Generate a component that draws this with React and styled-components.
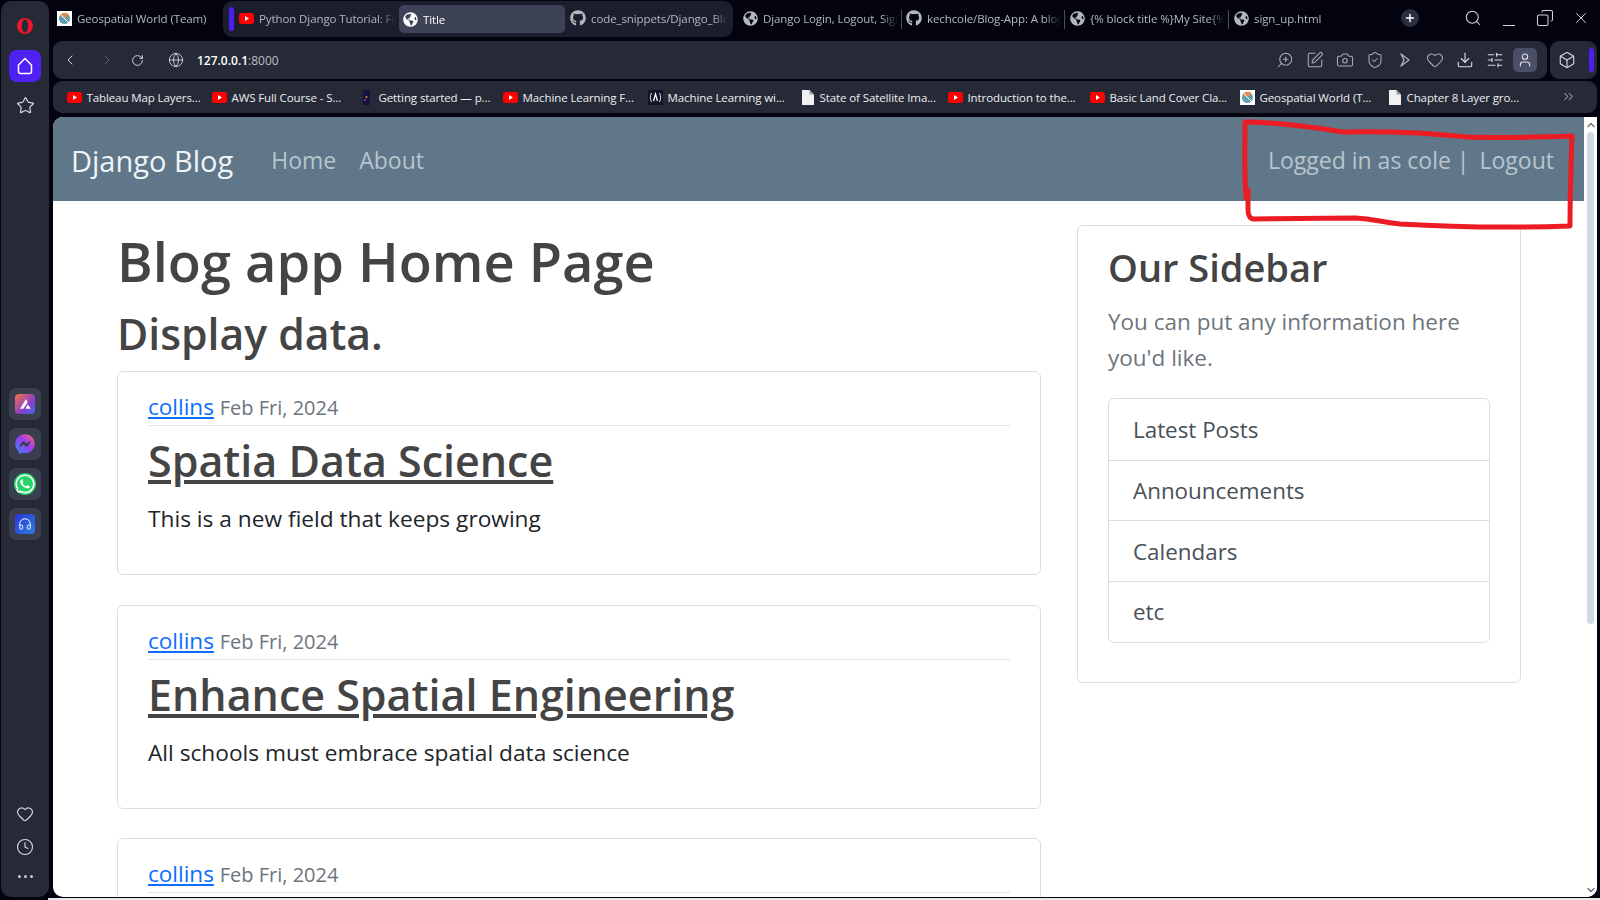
import React from 'react';
import styled, { createGlobalStyle } from 'styled-components';
import {
  ChevronLeft, ChevronRight, RotateCw, Globe, ZoomIn, SquarePen, Camera, ShieldCheck,
  Heart, Download, SlidersHorizontal, User, Box, Search, Copy, X, Plus, Star, Clock, ChevronsRight, ChevronDown, ChevronUp, Headphones,
} from 'lucide-react';
import { FaGithub, FaGlobeAmericas, FaWhatsapp, FaFacebookMessenger } from 'react-icons/fa';

const UI = '"Open Sans", "Noto Sans", "Liberation Sans", sans-serif';

const Global = createGlobalStyle`
  html, body { margin: 0; padding: 0; height: 900px; overflow: hidden; background: #02030f; }
  * { box-sizing: border-box; }
  body { font-family: ${UI}; }
`;

const Screen = styled.div`
  position: relative; width: 1600px; height: 900px; background: #02030f; overflow: hidden;
  display: grid; grid-template-columns: 53px 1fr;
`;
const Rail = styled.aside`
  margin: 1px 0 3px 1px; width: 48px; background: #262a36; border-radius: 10px;
  display: flex; flex-direction: column; align-items: center; padding-top: 17px; color: #d5d8df;
`;
const RailHome = styled.div`
  width: 32px; height: 32px; border-radius: 8px; background: #5021f5; color: #fff;
  display: flex; align-items: center; justify-content: center; margin-top: 16px;
`;
const RailPlain = styled.div`
  height: 32px; margin-top: 7px; display: flex; align-items: center; justify-content: center;
`;
const RailApps = styled.div`
  margin-top: 267px; display: flex; flex-direction: column; gap: 8px;
`;
const RailApp = styled.div`
  width: 32px; height: 32px; border-radius: 7px; background: #3a3e4e;
  display: flex; align-items: center; justify-content: center;
`;
const AppTile = styled.div`
  width: 20px; height: 20px; border-radius: 4px; background: ${p => p.$bg};
  display: flex; align-items: center; justify-content: center; color: #fff;
`;
const RailFoot = styled.div`
  margin-top: auto; display: flex; flex-direction: column; align-items: center; gap: 15px; padding-bottom: 19px;
`;
const Dots = styled.div`
  display: flex; gap: 3px; margin-top: 4px;
  & > i { width: 3px; height: 3px; border-radius: 50%; background: #c8ccd6; display: block; }
`;

const Column = styled.div`
  display: flex; flex-direction: column; min-width: 0; height: 900px;
`;
const TabRow = styled.div`
  height: 41px; display: flex; align-items: flex-start; position: relative; flex: none;
`;
const TabGroup = styled.div`
  display: flex; align-items: center; height: 36px; margin-top: 1px; background: #1b1e2c; border-radius: 9px; padding-left: 6px;
  margin-right: 5px;
`;
const GroupBar = styled.div`
  width: 5px; height: 24px; background: #4a1ff0; border-radius: 3px; margin-right: 5px; flex: none;
`;
const Tab = styled.div`
  width: ${p => p.$w}px; height: ${p => p.$active ? 28 : 36}px; flex: none; display: flex; align-items: center; gap: 5px;
  padding: 0 4px ${p => p.$active ? 0 : 2}px ${p => p.$pad ?? 4}px; margin-top: ${p => p.$plain ? 1 : 0}px;
  border-radius: 5px; background: ${p => p.$active ? '#3e4257' : 'transparent'};
  color: ${p => p.$active ? '#fff' : '#b4b7c1'}; font-size: 11.5px; letter-spacing: -0.1px; position: relative;
  ${p => p.$sep ? `&::after { content: ''; position: absolute; right: 0; top: 9px; height: 19px; width: 1px; background: #4a4d5a; }` : ''}
`;
const TabText = styled.span`
  white-space: nowrap; overflow: hidden; flex: 1; min-width: 0;
  -webkit-mask-image: linear-gradient(to right, #000 ${p => p.$full ? 100 : 88}%, transparent 100%);
  mask-image: linear-gradient(to right, #000 ${p => p.$full ? 100 : 88}%, transparent 100%);
`;
const NewTab = styled.div`
  position: absolute; left: 1348px; top: 9px; width: 18px; height: 18px; border-radius: 50%;
  background: #2b2e3c; color: #fff; display: flex; align-items: center; justify-content: center;
`;
const WindowButtons = styled.div`
  position: absolute; right: 10px; top: 9px; display: flex; align-items: center; gap: 18px; color: #d2d4da;
`;
const MinGlyph = styled.div`
  width: 18px; height: 18px; position: relative;
  &::after { content: ''; position: absolute; left: 3px; right: 3px; bottom: 1px; height: 1px; background: #d2d4da; }
`;
const Mirrored = styled.span`
  display: flex; transform: scaleX(-1);
`;

const AddressRow = styled.div`
  height: 38px; display: flex; gap: 3px; flex: none; padding-right: 3px;
`;
const AddressBar = styled.div`
  flex: 1; background: #262a36; border-radius: 9px; display: flex; align-items: center; color: #c6c9d1;
  padding-left: 8px; padding-right: 10px;
`;
const NavBtn = styled.div`
  width: 18px; height: 18px; display: flex; align-items: center; justify-content: center;
  margin-right: ${p => p.$mr}px; color: ${p => p.$dim ? '#5c6070' : '#cfd2da'};
`;
const Url = styled.div`
  font-size: 12px; color: #fff; font-weight: 600;
  & > span { color: #b9bcc6; font-weight: 400; }
`;
const Tools = styled.div`
  margin-left: auto; display: flex; align-items: center; gap: 12px; color: #a9acb7;
`;
const ProfileBtn = styled.div`
  width: 24px; height: 24px; border-radius: 5px; background: #4b4f66; color: #e2e4ea; margin-left: -3px;
  display: flex; align-items: center; justify-content: center;
`;
const ExtBox = styled.div`
  width: 47px; background: #262a36; border-radius: 9px; display: flex; align-items: center; justify-content: space-between;
  padding: 0 3px 0 8px; color: #d5d8df;
`;
const ExtBar = styled.div`
  width: 5px; height: 24px; background: #4a1ff0; border-radius: 3px;
`;
const Bookmarks = styled.div`
  height: 32px; margin: 2px 3px 0 0; background: #262a36; border-radius: 9px; display: flex; align-items: center;
  padding-left: 14px; flex: none; color: #eceef2; font-size: 11.5px; letter-spacing: -0.1px; position: relative;
`;
const Bookmark = styled.div`
  width: ${p => p.$w}px; flex: none; display: flex; align-items: center; gap: 4.500px; white-space: nowrap; overflow: hidden;
`;
const MoreBookmarks = styled.div`
  position: absolute; left: 1508px; top: 8px; color: #c6c9d1; display: flex;
`;

const Page = styled.main`
  margin-top: 4px; height: 780px; flex: none; background: #fff; border-radius: 10px 0 10px 10px; overflow: hidden;
  display: grid; grid-template-columns: 1531px 1fr; margin-right: 3px;
`;
const PageBody = styled.div`
  min-width: 0; overflow: hidden; color: #444;
`;
const Scrollbar = styled.div`
  position: relative; background: #fff; display: flex; flex-direction: column; align-items: center; color: #777;
`;
const Thumb = styled.div`
  width: 7px; height: 492px; background: #cfd9e3; border-radius: 4px;
`;
const ScrollArrow = styled.div`
  height: 15px; display: flex; align-items: center; justify-content: center;
  margin-top: ${p => p.$auto ? 'auto' : 0};
`;
const Navbar = styled.nav`
  height: 84px; background: #5f7789; display: flex; align-items: center; padding: 2px 30px 0 18px; font-size: 23px;
  color: #b8c5ce;
`;
const Brand = styled.div`
  font-size: 29px; color: #f1f4f6; margin-right: 38px;
`;
const NavLink = styled.div`
  margin-right: ${p => p.$mr || 0}px; margin-left: ${p => p.$ml || 0}px; white-space: nowrap;
`;
const UserInfo = styled.div`
  margin-left: auto; display: flex; white-space: nowrap;
`;
const Content = styled.div`
  display: grid; grid-template-columns: 924px 444px; column-gap: 36px; padding: 24px 0 0 64px;
`;
const Posts = styled.div`
  display: flex; flex-direction: column;
`;
const Title = styled.h1`
  margin: 0; font-size: 54.2px; line-height: 72px; font-weight: 600; color: #444;
`;
const Subtitle = styled.h2`
  margin: 8px 0 0; font-size: 42.7px; line-height: 58px; font-weight: 600; color: #444; height: 66px;
`;
const Card = styled.article`
  border: 1px solid #ddd; border-radius: 6px; padding: 16px 30px 0; height: 204px; margin-bottom: 29.7px; flex: none;
`;
const Meta = styled.div`
  border-bottom: 1px solid #e2e2e2; height: 38px; font-size: 22.5px; line-height: 38px; color: #6c757d; white-space: nowrap;
`;
const MetaDate = styled.span`
  font-size: 20px;
`;
const Author = styled.a`
  color: #0d6efd; text-decoration: underline;
`;
const PostTitle = styled.h2`
  margin: 0; font-size: 43px; line-height: 70px; font-weight: 600; color: #444; text-decoration: underline; white-space: nowrap;
`;
const PostBody = styled.p`
  margin: 5px 0 0; font-size: 22.7px; line-height: 36px; color: #212529;
`;
const Aside = styled.aside`
  border: 1px solid #ddd; border-radius: 6px; padding: 16px 30px 0; height: 458px;
`;
const AsideTitle = styled.h3`
  margin: 0; font-size: 38px; line-height: 50px; font-weight: 600; color: #444;
`;
const AsideText = styled.p`
  margin: 12px 0 0; font-size: 22.5px; line-height: 36px; color: #6c757d;
`;
const List = styled.ul`
  list-style: none; margin: 22px 0 0; padding: 0; border: 1px solid #ddd; border-radius: 6px;
`;
const ListItem = styled.li`
  height: 60.7px; padding-left: 24px; display: flex; align-items: center; font-size: 22.4px; color: #495057;
  & + & { border-top: 1px solid #ddd; }
`;
const Scribble = styled.svg`
  position: absolute; left: 0; top: 0; width: 1600px; height: 900px; pointer-events: none;
`;
const BottomEdge = styled.div`
  position: absolute; left: 48px; right: 0; bottom: 0; height: 2px; background: #e8e8e8;
`;

const Yt = () => (
  <svg width="15" height="11" viewBox="0 0 15 11" style={{ flex: 'none' }}>
    <rect width="15" height="11" rx="2.5" fill="#f00" />
    <path d="M6 3l4 2.5L6 8z" fill="#fff" />
  </svg>
);
const Geo = () => (
  <svg width="15" height="15" viewBox="0 0 15 15" style={{ flex: 'none' }}>
    <rect width="15" height="15" fill="#fff" />
    <circle cx="7.5" cy="7.5" r="5.5" fill="#5f9fb0" />
    <path d="M3 5a5.5 5.500 0 0 1 8-2.500L9 7z" fill="#e98a3c" />
    <path d="M4 4l8 8" stroke="#fff" strokeWidth="1" />
  </svg>
);
const Doc = () => (
  <svg width="12" height="15" viewBox="0 0 12 15" style={{ flex: 'none', marginLeft: 2, marginRight: 1 }}>
    <path d="M0 0h7.500L12 4.500V15H0z" fill="#f1f1f3" />
    <path d="M7.500 0v4.500H12z" fill="#9b9ca4" />
  </svg>
);
const Pytorch = () => (
  <svg width="15" height="15" viewBox="0 0 15 15" style={{ flex: 'none' }}>
    <rect x="4" width="7" height="15" fill="#17123f" />
    <circle cx="7.5" cy="7" r="1" fill="#e0a030" />
    <circle cx="6" cy="10" r="1" fill="#b03090" />
  </svg>
);
const Tf = () => (
  <svg width="15" height="15" viewBox="0 0 15 15" style={{ flex: 'none' }}>
    <rect width="15" height="15" fill="#101428" />
    <path d="M3.500 3C2 6 2 9 3.500 12M11.500 3C13 6 13 9 11.500 12" stroke="#dfe2ea" strokeWidth="1" fill="none" />
    <path d="M5.500 11l2-7 2 7" stroke="#fff" strokeWidth="1.3" fill="none" />
  </svg>
);
const Opera = () => (
  <svg width="16" height="16" viewBox="0 0 16 16">
    <path fillRule="evenodd" d="M8 0a8 8 0 1 1 0 16A8 8 0 0 1 8 0zm0 1.600c-1.900 0-3.200 2.800-3.200 6.400s1.300 6.400 3.200 6.400 3.200-2.800 3.200-6.400S9.900 1.600 8 1.600z" fill="#f0142c" />
  </svg>
);
const HouseIcon = () => (
  <svg width="20" height="20" viewBox="0 0 20 20" fill="none" stroke="currentColor" strokeWidth="1.5" strokeLinejoin="round">
    <path d="M3.500 9L10 2.500 16.500 9v6.500a2 2 0 0 1-2 2h-9a2 2 0 0 1-2-2z" />
  </svg>
);
const MessengerGradient = () => (
  <svg width="0" height="0" style={{ position: 'absolute' }}>
    <defs>
      <linearGradient id="msg" x1="0" y1="1" x2="1" y2="0">
        <stop offset="0" stopColor="#2f8cff" />
        <stop offset="0.55" stopColor="#a03cf0" />
        <stop offset="1" stopColor="#ff6a6a" />
      </linearGradient>
    </defs>
  </svg>
);

const tabsAfter = [
  { icon: <FaGlobeAmericas size={15} />, text: 'Django Login, Logout, Sign Up Tutorial', w: 164, pad: 5, sep: true },
  { icon: <FaGithub size={16} />, text: 'kechcole/Blog-App: A blog application', w: 163, pad: 4, sep: true },
  { icon: <FaGlobeAmericas size={15} />, text: '{% block title %}My Site{% endblock %}', w: 164, pad: 5, sep: true },
  { icon: <FaGlobeAmericas size={15} />, text: 'sign_up.html', w: 120, pad: 5, full: true },
];
const bookmarks = [
  [<Yt />, 'Tableau Map Layers...', 145], [<Yt />, 'AWS Full Course - S...', 147],
  [<Pytorch />, 'Getting started — p...', 144], [<Yt />, 'Machine Learning F...', 145],
  [<Tf />, 'Machine Learning wi...', 152], [<Doc />, 'State of Satellite Ima...', 148],
  [<Yt />, 'Introduction to the...', 142], [<Yt />, 'Basic Land Cover Cla...', 150],
  [<Geo />, 'Geospatial World (T...', 147], [<Doc />, 'Chapter 8 Layer gro...', 140],
];
const posts = ['Spatia Data Science', 'Enhance Spatial Engineering', 'Third Post'];
const links = ['Latest Posts', 'Announcements', 'Calendars', 'etc'];
const tools = [SquarePen, Camera, ShieldCheck];

export default function App() {
  return (
    <Screen>
      <Global />
      <MessengerGradient />
      <Rail>
        <Opera />
        <RailHome><HouseIcon /></RailHome>
        <RailPlain><Star size={19} strokeWidth={1.5} /></RailPlain>
        <RailApps>
          <RailApp><AppTile $bg="linear-gradient(135deg,#f5733a,#8a3fd0 60%,#3a6be0)">
            <svg width="13" height="13" viewBox="0 0 12 12"><path d="M6.500 1L1 10h3l4-6zM8 6l-2 4h5z" fill="#fff" /></svg>
          </AppTile></RailApp>
          <RailApp><FaFacebookMessenger size={20} fill="url(#msg)" /></RailApp>
          <RailApp><FaWhatsapp size={22} color="#fff" style={{ background: '#25d366', borderRadius: 11 }} /></RailApp>
          <RailApp><AppTile $bg="linear-gradient(135deg,#2a35d8,#2d7de0)"><Headphones size={14} strokeWidth={1.6} /></AppTile></RailApp>
        </RailApps>
        <RailFoot>
          <Heart size={18} strokeWidth={1.5} />
          <Clock size={18} strokeWidth={1.5} />
          <Dots><i /><i /><i /></Dots>
        </RailFoot>
      </Rail>
      <Column>
        <TabRow>
          <Tab $w={170} $pad={4} $plain><Geo /><TabText $full>Geospatial World (Team)</TabText></Tab>
          <TabGroup>
            <GroupBar />
            <Tab $w={160} $pad={0}><Yt /><TabText>Python Django Tutorial: Full-Featured</TabText></Tab>
            <Tab $w={166} $active><FaGlobeAmericas size={15} style={{ flex: 'none' }} /><TabText $full>Title</TabText></Tab>
            <Tab $w={168} $pad={5}><FaGithub size={16} style={{ flex: 'none' }} /><TabText>code_snippets/Django_Blog/12-Password</TabText></Tab>
          </TabGroup>
          {tabsAfter.map(t => (
            <Tab key={t.text} $w={t.w} $pad={t.pad} $sep={t.sep} $plain>
              {React.cloneElement(t.icon, { style: { flex: 'none' } })}
              <TabText $full={t.full}>{t.text}</TabText>
            </Tab>
          ))}
          <NewTab><Plus size={12} strokeWidth={3} /></NewTab>
          <WindowButtons>
            <Search size={18} strokeWidth={1.4} />
            <MinGlyph />
            <Mirrored><Copy size={18} strokeWidth={1.4} /></Mirrored>
            <X size={18} strokeWidth={1.3} />
          </WindowButtons>
        </TabRow>
        <AddressRow>
          <AddressBar>
            <NavBtn $mr={19}><ChevronLeft size={16} strokeWidth={1.5} /></NavBtn>
            <NavBtn $mr={12} $dim><ChevronRight size={16} strokeWidth={1.5} /></NavBtn>
            <NavBtn $mr={21}><RotateCw size={13} strokeWidth={1.8} /></NavBtn>
            <NavBtn $mr={12}><Globe size={16} strokeWidth={1.4} /></NavBtn>
            <Url>127.0.0.1<span>:8000</span></Url>
            <Tools>
              <Mirrored><ZoomIn size={18} strokeWidth={1.4} /></Mirrored>
              {tools.map((I, i) => <I key={i} size={18} strokeWidth={1.4} />)}
              <svg width="18" height="18" viewBox="0 0 18 18" fill="none" stroke="currentColor" strokeWidth="1.4"><path d="M5 3l8 6-8 6 3-6z" strokeLinejoin="round" /></svg>
              <Heart size={18} strokeWidth={1.4} />
              <Download size={18} strokeWidth={1.5} color="#d8dae0" />
              <SlidersHorizontal size={18} strokeWidth={1.5} color="#d8dae0" />
              <ProfileBtn><User size={16} strokeWidth={1.6} /></ProfileBtn>
            </Tools>
          </AddressBar>
          <ExtBox><Box size={18} strokeWidth={1.5} /><ExtBar /></ExtBox>
        </AddressRow>
        <Bookmarks>
          {bookmarks.map(([icon, text, w]) => (
            <Bookmark key={text} $w={w}>{icon}<span>{text}</span></Bookmark>
          ))}
          <MoreBookmarks><ChevronsRight size={15} strokeWidth={1.5} /></MoreBookmarks>
        </Bookmarks>
        <Page>
          <PageBody>
            <Navbar>
              <Brand>Django Blog</Brand>
              <NavLink $mr={23}>Home</NavLink>
              <NavLink>About</NavLink>
              <UserInfo>
                <NavLink>Logged in as cole |</NavLink>
                <NavLink $ml={10}>Logout</NavLink>
              </UserInfo>
            </Navbar>
            <Content>
              <Posts>
                <Title>Blog app Home Page</Title>
                <Subtitle>Display data.</Subtitle>
                {posts.map((t, i) => (
                  <Card key={t}>
                    <Meta><Author>collins</Author> <MetaDate>Feb Fri, 2024</MetaDate></Meta>
                    <PostTitle>{t}</PostTitle>
                    <PostBody>{i === 0 ? 'This is a new field that keeps growing' : 'All schools must embrace spatial data science'}</PostBody>
                  </Card>
                ))}
              </Posts>
              <Aside>
                <AsideTitle>Our Sidebar</AsideTitle>
                <AsideText>You can put any information here you'd like.</AsideText>
                <List>{links.map(l => <ListItem key={l}>{l}</ListItem>)}</List>
              </Aside>
            </Content>
          </PageBody>
          <Scrollbar>
            <ScrollArrow><ChevronUp size={12} strokeWidth={3} /></ScrollArrow>
            <Thumb />
            <ScrollArrow $auto><ChevronDown size={12} strokeWidth={3} /></ScrollArrow>
          </Scrollbar>
        </Page>
      </Column>
      <BottomEdge />
      <Scribble viewBox="0 0 1600 900" fill="none">
        <path d="M1246 198C1244 170 1245 145 1245 122C1275 122 1320 128 1343 132C1390 131 1430 133 1467 137C1500 138 1540 137 1572 136C1571 165 1570 200 1570 226C1510 228 1450 227 1400 224C1380 222 1375 219 1355 218L1254 219C1250 219 1248 215 1248 210L1248 190" stroke="#ec1c24" strokeWidth="5" strokeLinecap="round" strokeLinejoin="round" />
      </Scribble>
    </Screen>
  );
}
